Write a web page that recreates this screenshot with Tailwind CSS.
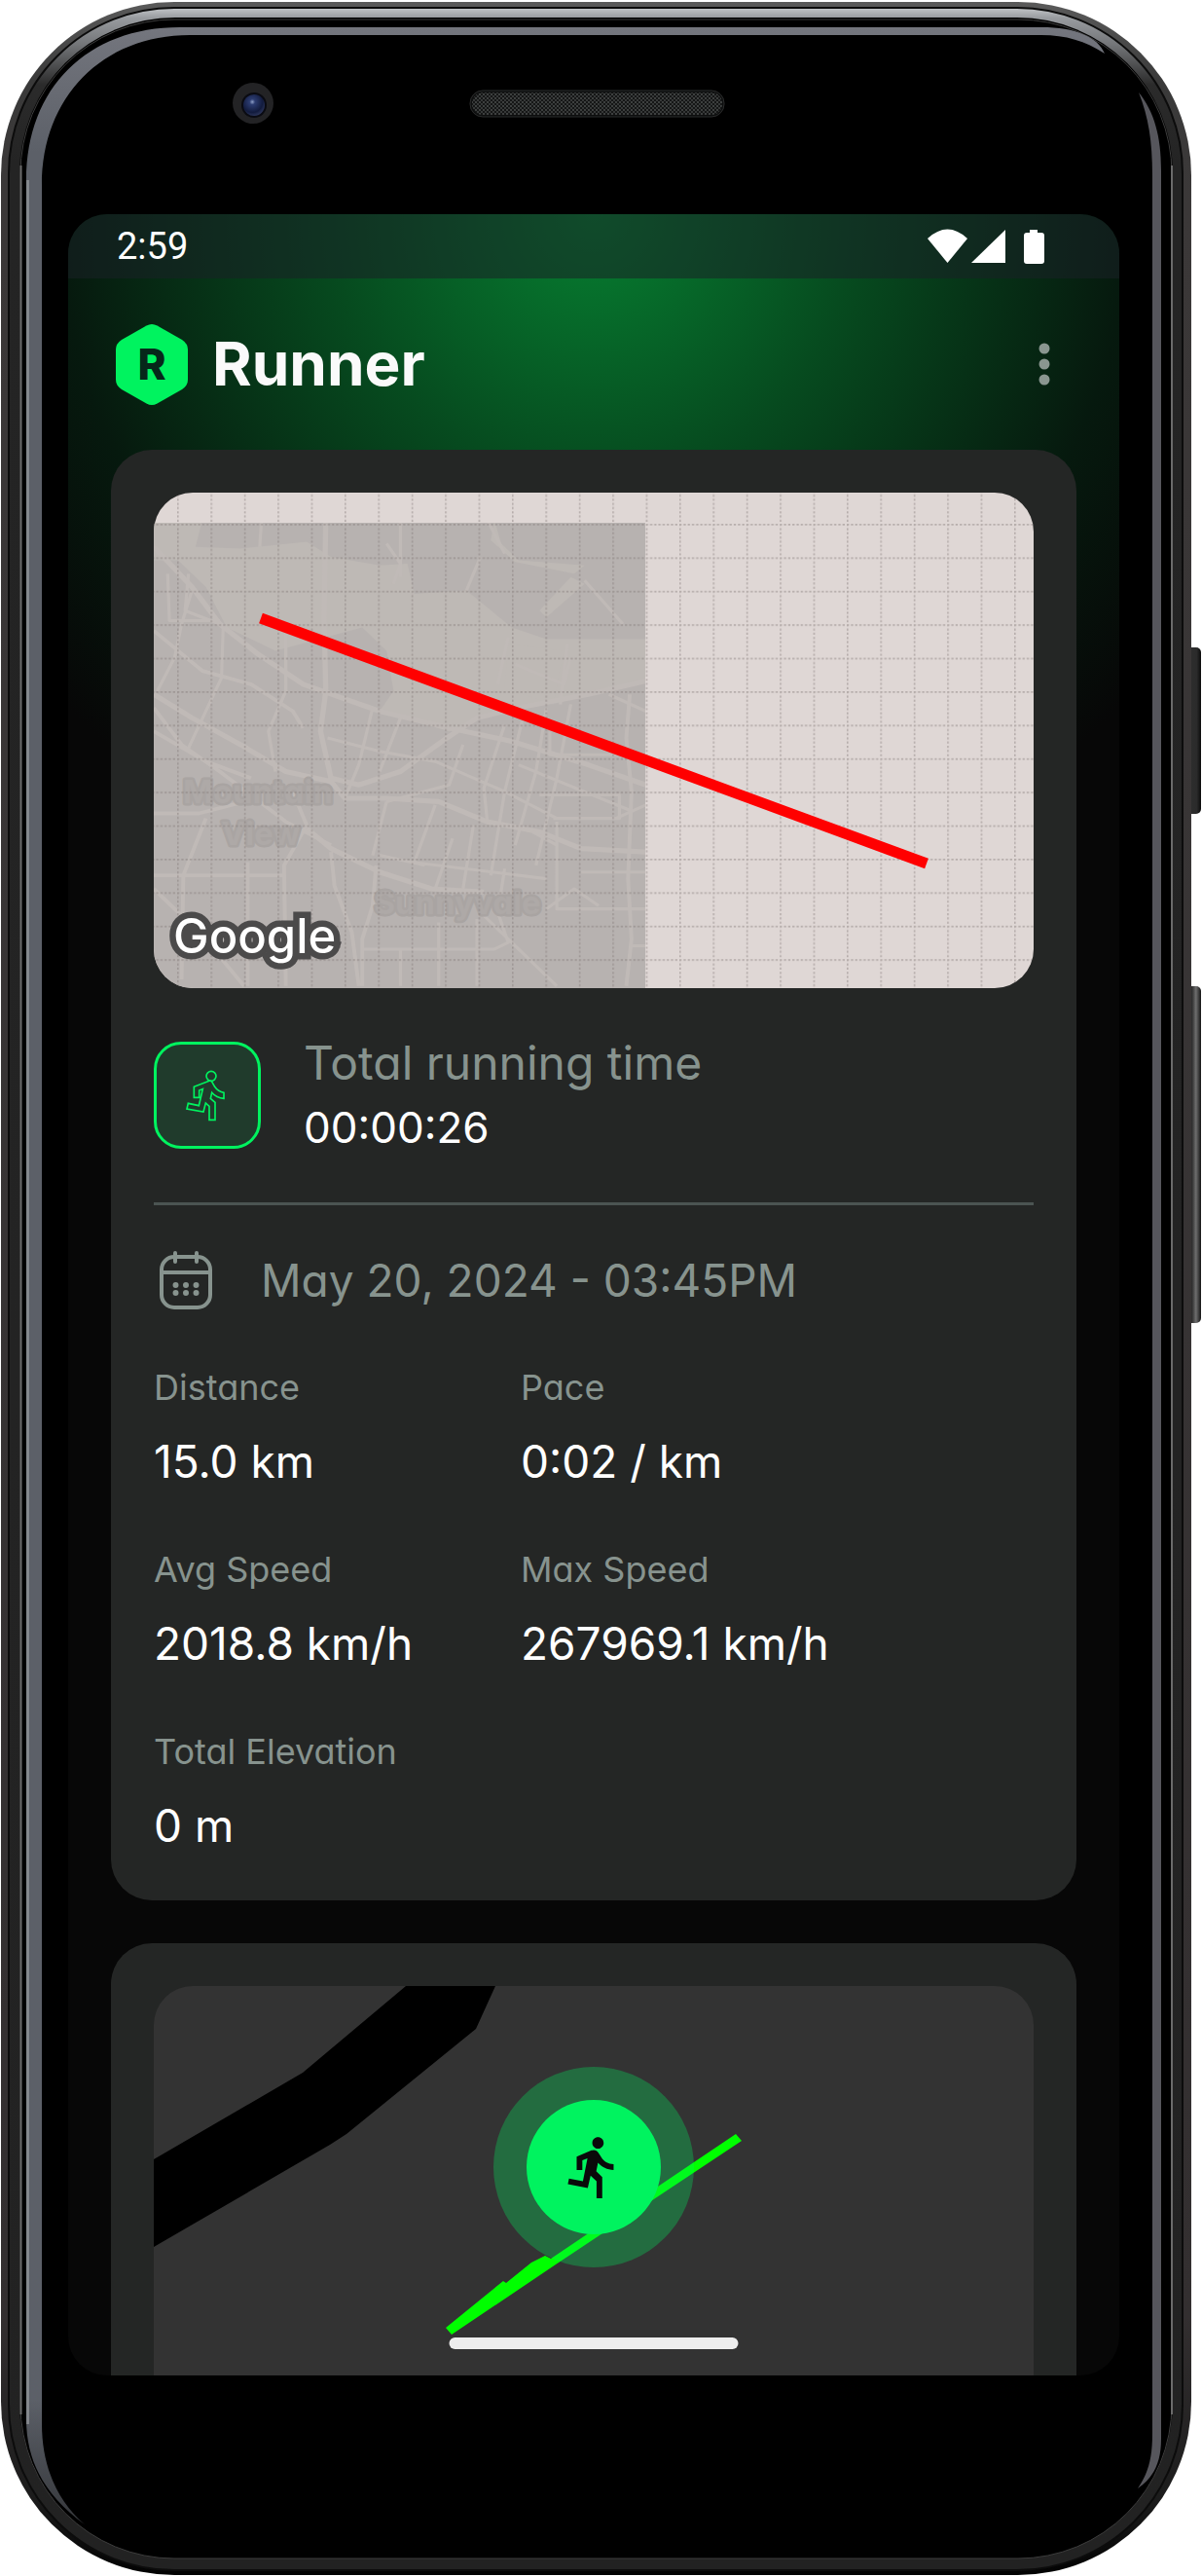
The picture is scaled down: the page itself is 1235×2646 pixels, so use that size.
<!DOCTYPE html>
<html lang="en">
<head>
<meta charset="utf-8">
<meta name="viewport" content="width=device-width, initial-scale=1">
<title>Runner</title>
<script src="https://cdn.jsdelivr.net/npm/@tailwindcss/browser@4"></script>
</head>
<body class="bg-white font-[Inter,sans-serif] [font-feature-settings:'cv11']">
<div class="relative pt-[220px] pr-[85px] pb-[206px] pl-[70px]">

  <!-- Phone body -->
  <svg class="absolute inset-0 h-full w-full" viewBox="0 0 1235 2646" preserveAspectRatio="none" aria-hidden="true">
    <defs>
      <linearGradient id="shell" x1="0" y1="0" x2="0" y2="1">
        <stop offset="0" stop-color="#5a5a5a"/><stop offset=".03" stop-color="#3a3a3a"/><stop offset=".08" stop-color="#3b3838"/>
        <stop offset=".9" stop-color="#332f30"/><stop offset=".97" stop-color="#1c1c1c"/><stop offset="1" stop-color="#020202"/>
      </linearGradient>
      <linearGradient id="band" gradientUnits="userSpaceOnUse" x1="0" y1="8" x2="0" y2="2641">
        <stop offset="0" stop-color="#c2c5c8"/><stop offset=".004" stop-color="#989b9f"/><stop offset=".014" stop-color="#75777a"/><stop offset=".03" stop-color="#2b2b2b"/>
        <stop offset=".06" stop-color="#242424"/><stop offset="1" stop-color="#222222"/>
      </linearGradient>
      <linearGradient id="shine" x1="0" y1="0" x2="0" y2="1">
        <stop offset="0" stop-color="#74767e"/><stop offset=".05" stop-color="#5c6068"/><stop offset=".95" stop-color="#5c6068"/><stop offset="1" stop-color="#34363a"/>
      </linearGradient>
      <linearGradient id="key" x1="0" y1="0" x2="1" y2="0">
        <stop offset="0" stop-color="#111"/><stop offset=".3" stop-color="#2d2d2d"/><stop offset=".7" stop-color="#2b2b2b"/><stop offset="1" stop-color="#0b0b0b"/>
      </linearGradient>
      <linearGradient id="keyLong" x1="0" y1="0" x2="1" y2="0">
        <stop offset="0" stop-color="#0b0b0b"/><stop offset=".4" stop-color="#333"/><stop offset=".65" stop-color="#6e6e6e"/><stop offset="1" stop-color="#141414"/>
      </linearGradient>
      <radialGradient id="lens" cx=".42" cy=".35" r=".65">
        <stop offset="0" stop-color="#8fa0c8"/><stop offset=".2" stop-color="#2c3c70"/><stop offset=".75" stop-color="#121b3d"/><stop offset="1" stop-color="#2a3358"/>
      </radialGradient>
      <pattern id="mesh" width="4" height="4" patternUnits="userSpaceOnUse">
        <rect width="4" height="4" fill="#151616"/><circle cx="1" cy="1" r=".9" fill="#515453"/><circle cx="3" cy="3" r=".9" fill="#464948"/>
      </pattern>
    </defs>
    <rect x="1219" y="665" width="15" height="171" rx="5" fill="url(#key)"/>
    <rect x="1219" y="1013" width="15" height="346" rx="5" fill="url(#keyLong)"/>
    <rect x="1" y="2" width="1223" height="2643" rx="178" fill="url(#shell)"/>
    <rect x="9" y="8" width="1206" height="2632" rx="170" fill="url(#band)" stroke="#0c0c0c" stroke-width="2"/>
    <rect x="20" y="18" width="1185" height="2610" rx="160" fill="#000"/>
    <rect x="21" y="20" width="1183" height="2608" rx="158" fill="#000" stroke="#3d3d3d"/>
    <path d="M21.500 170V2480M1204 170V2480" stroke="#6b6b6b" stroke-width="2"/>
    <path d="M87 2593C48 2565 27 2530 27 2485V185C27 90 90 28 185 28H1070C1105 28 1128 38 1135 55C1115 42 1095 36 1070 36H195C105 36 43 100 43 190V2490C43 2535 60 2570 87 2593Z" fill="url(#shine)"/>
    <path d="M28.500 185V2490" stroke="#a0a3a7" stroke-width="3" opacity=".6"/>
    <path d="M1170 95C1186 115 1193 140 1193 175V2505C1193 2530 1185 2545 1169 2556C1180 2540 1184 2525 1184 2500V180C1184 145 1180 120 1170 95Z" fill="#56565c"/>
    <circle cx="260" cy="106" r="21" fill="#232325"/>
    <circle cx="261" cy="108" r="13" fill="#0a0b12"/>
    <circle cx="261" cy="108" r="11" fill="url(#lens)"/>
    <rect x="483" y="93" width="261" height="27" rx="13" fill="#0d0e0e" stroke="#2b2c2c" stroke-width="1"/>
    <rect x="485" y="95" width="257" height="23" rx="11" fill="url(#mesh)"/>
  </svg>

  <!-- Screen -->
  <div class="relative overflow-hidden rounded-[40px] bg-[#070707] bg-[radial-gradient(circle_740px_at_50%_0px,#067f31_0%,#064b1f_36%,#06190e_74%,#070707_100%)]">
    <div class="flex h-[66px] items-center justify-between bg-[#1a2126]/55 pr-[75px] pl-[50px] font-[Roboto,sans-serif] text-[38px] leading-[66px] text-white">
      <time>2:59</time>
      <svg class="h-[36px] w-[122px]" viewBox="0 0 122 36" fill="#fff" role="img" aria-label="Wi-Fi, mobile signal, battery">
        <path d="M0 10Q20.500-9 41 10L20.500 35Z"/>
        <path d="M45 35H80V1Z"/>
        <path d="M105 1H113V4H117Q120 4 120 7V33Q120 36 117 36H102Q99 36 99 33V7Q99 4 102 4H105Z"/>
      </svg>
    </div>

    <header class="flex h-[176px] items-center pr-[67px] pl-[49px]">
      <div class="relative flex h-[83px] w-[74px] items-center justify-center">
        <svg class="absolute inset-0 h-full w-full" viewBox="0 0 74 83" aria-hidden="true">
          <path d="M31.500 1.500Q37-1.500 42.500 1.500L68 16Q74 20 74 26V57Q74 63 68 67L42.500 81.500Q37 84.500 31.500 81.500L6 67Q0 63 0 57V26Q0 20 6 16Z" fill="#00f35f"/>
        </svg>
        <span class="relative text-[44px] leading-[44px] font-extrabold text-[#06281a]">R</span>
      </div>
      <h1 class="ml-[25px] text-[62px] leading-[88px] font-bold text-[#fafafa]">Runner</h1>
      <button class="ml-auto flex h-[66px] w-[20px] items-center justify-center" aria-label="More options">
        <svg class="h-[44px] w-[12px]" viewBox="0 0 12 44" fill="#8a9690"><circle cx="6" cy="6" r="5.500"/><circle cx="6" cy="22" r="5.500"/><circle cx="6" cy="38" r="5.500"/></svg>
      </button>
    </header>

    <main class="flex flex-col gap-[44px] px-[44px]">
      <article class="rounded-[42px] bg-[#242625] p-[44px]">
        <!-- Route map -->
        <svg class="block h-[509px] w-full rounded-[40px]" viewBox="0 0 904 509" preserveAspectRatio="xMinYMin slice" role="img" aria-label="Route map">
          <defs>
            <pattern id="grid" x="24" y="32" width="34.400" height="34.400" patternUnits="userSpaceOnUse">
              <path d="M.8 0V34.400M0 .8H34.400" stroke="#7d7371" stroke-opacity=".42" stroke-width="1.600" stroke-dasharray="2.300 2"/>
            </pattern>
            <clipPath id="tile"><rect x="0" y="31" width="505" height="478"/></clipPath>
          </defs>
          <rect width="904" height="509" fill="#dfd7d5"/>
          <g clip-path="url(#tile)">
            <rect y="31" width="506" height="478" fill="#b7b2b0"/>
            <g transform="scale(.357 .3443) translate(-50 -48)">
              <path d="M50 130H190L170 210L300 215L490 195L560 240L700 265L780 260L800 350L950 340L1080 450L1180 485H1466V610L1300 650L1120 690L1000 720L900 760L700 700L740 640L720 520L650 450L580 470L400 520L260 450L200 330L120 250H50Z" fill="#beb9b5"/>
              <path d="M1160 400L1250 300L1290 320L1180 420ZM1030 130L1050 200L1100 250L1290 265L1260 290L1090 255L1020 190ZM1070 500L1060 630L1200 680L1230 520Z" fill="#beb9b5"/>
              <g fill="none" stroke="#c0bab7" stroke-linejoin="round">
                <path stroke-width="15" d="M50 210L160 330L240 440L350 530L480 620L700 700L900 750L1080 790L1300 860L1466 920M50 650L160 720L300 800L430 880L560 910L600 960L720 960L870 970L1010 1030L1160 1060L1280 1110L1466 1120M545 130L540 420L545 640L530 760L560 900L640 920L760 880L880 790L980 720L1100 690L1300 650L1466 610M490 1050L560 1110L700 1180L850 1230L1000 1240"/>
                <path stroke-width="11" d="M1420 650L1410 780L1425 940L1415 1200L1425 1380L1410 1520M50 460L190 580L330 620L450 700L480 750M50 760L200 850L330 900M50 1005H180L350 960M50 1190H430M130 1500L135 1190L200 1020M320 1520V1150M430 1520L425 1160L490 1040L450 940M560 1120L570 1220L620 1360L640 1520M690 1160L680 1280L650 1380V1520M50 1230L190 1370L310 1520M50 690L130 800L240 880L430 1030L560 1100"/>
                <path stroke-width="9" d="M430 440V640L380 760L400 880M250 440L245 600L150 810M240 440L140 400L150 290M90 290L95 430H240M160 340L130 440L110 540L60 640M680 690L640 860L600 960M760 720L700 880M1060 740L1000 930L1010 1030M1110 730L1060 940L1020 1190M1180 690L1150 880L1090 1100M1250 680L1210 900L1150 1160M550 780L700 820L860 850L1060 940L1210 1020M720 970L680 1130M860 980L800 1150M910 1080L860 1230M970 1040L940 1230M940 800L900 920L720 970M1190 760L1190 830H1420M1160 950H1390V1020H1200M1100 860L1430 1000M1210 1030V1290H1466M1140 1060L1210 1100M1280 1180H1466M1180 1290L1260 1230L1330 1280M1060 1170L1040 1300L1070 1390L1030 1410H650M760 1410V1520M870 1330V1520M980 1320V1520M1000 1310L1100 1410L1210 1520M1420 1400H1466M1010 130L1060 230M990 240L950 340M760 130V300M720 200L760 260L740 320M360 130L355 210M1090 560L1230 620L1250 540M1290 310L1400 440M1070 480L1040 620M1240 500L1220 680M1360 650L1466 700M1380 1020L1466 980M790 1150L1180 1200M700 1130L830 1160"/>
              </g>
            </g>
            <g font-family="Inter, sans-serif" font-size="33" font-weight="700" fill="#aea9a7" stroke="#a9a4a2" stroke-width="5" paint-order="stroke" stroke-linejoin="round" text-anchor="middle">
              <text x="107" y="319">Mountain</text>
              <text x="110" y="362">View</text>
              <text x="312" y="433">Sunnyvale</text>
            </g>
          </g>
          <rect width="904" height="509" fill="url(#grid)"/>
          <path d="M110 129L794 381" stroke="#f00" stroke-width="11"/>
          <text x="20" y="473" font-family="Inter, sans-serif" font-size="49" font-weight="500" fill="#fff" stroke="#4b4a4a" stroke-width="13" paint-order="stroke">Google</text>
        </svg>

        <section class="mt-[44px] flex items-center gap-[44px]">
          <div class="h-[110px] w-[110px] shrink-0 rounded-[28px] border-[3px] border-[#00f35f] bg-[#203b2c]">
            <svg class="block h-full w-full" viewBox="33 39 312 312" fill="none" stroke="#00f35f" stroke-width="5" aria-hidden="true">
              <circle cx="201" cy="136" r="15"/>
              <path d="M197 150L148 169V202H164V180L175 176L163 227L130 220L126 237L177 246L184 219L195 229V271H213V217L199 205L203 187Q217 204 240 205V187Q222 184 212 169L204 155Q201 150 197 150Z"/>
            </svg>
          </div>
          <div class="text-[44px] leading-[66px]">
            <h2 class="text-[48px] text-[#87938e]">Total running time</h2>
            <p class="text-white">00:00:26</p>
          </div>
        </section>

        <hr class="mt-[44px] h-[3px] border-0 bg-[#4b5452]">

        <div class="mt-[44px] flex items-center gap-[44px]">
          <svg class="h-[66px] w-[66px] shrink-0" viewBox="0 0 66 66" fill="none" stroke="#87938e" stroke-width="4" stroke-linecap="round" aria-hidden="true">
            <rect x="8" y="9" width="50" height="52" rx="13"/>
            <path d="M8 25H58"/><path d="M22 5V14M44 5V14"/>
            <path d="M22.500 38v.1M33 38v.1M43.500 38v.1M22.500 46v.1M33 46v.1M43.500 46v.1" stroke-width="6"/>
          </svg>
          <time class="text-[46px] leading-[66px] text-[#87938e]">May 20, 2024 - 03:45PM</time>
        </div>

        <dl class="mt-[52px] flex flex-wrap gap-y-[53px] text-[46px] leading-[66px] text-white">
          <div class="w-[377px]"><dt class="mb-[18px] text-[36px] leading-[50px] text-[#87938e]">Distance</dt><dd>15.0 km</dd></div>
          <div class="w-[377px]"><dt class="mb-[18px] text-[36px] leading-[50px] text-[#87938e]">Pace</dt><dd>0:02 / km</dd></div>
          <div class="w-[377px]"><dt class="mb-[18px] text-[36px] leading-[50px] text-[#87938e]">Avg Speed</dt><dd>2018.8 km/h</dd></div>
          <div class="w-[377px]"><dt class="mb-[18px] text-[36px] leading-[50px] text-[#87938e]">Max Speed</dt><dd>267969.1 km/h</dd></div>
          <div class="w-[377px]"><dt class="mb-[18px] text-[36px] leading-[50px] text-[#87938e]">Total Elevation</dt><dd>0 m</dd></div>
        </dl>
      </article>

      <article class="rounded-t-[42px] bg-[#242625] px-[44px] pt-[44px]">
        <svg class="block h-[400px] w-full rounded-t-[40px]" viewBox="0 0 904 400" preserveAspectRatio="xMidYMin slice" role="img" aria-label="Live position">
          <rect width="904" height="400" fill="#333"/>
          <path d="M259 0H351L331 44L198 152L181 163L0 268V178L153 89Z" fill="#000"/>
          <path d="M598 152L604 159L413 286L306 358L300 351L359 303L362 305L388 284L402 277L408 280Z" fill="#0f0"/>
          <circle cx="452" cy="186" r="103" fill="#00f35f" fill-opacity=".3"/>
          <circle cx="452" cy="186" r="69" fill="#00f35f"/>
          <g transform="translate(417 151) scale(2.920)" fill="#0a0a0a">
            <path d="M13.490 5.480c1.100 0 2-.9 2-2s-.9-2-2-2-2 .9-2 2 .9 2 2 2zm-3.600 13.900l1-4.400 2.100 2v6h2v-7.500l-2.100-2 .6-3c1.300 1.500 3.300 2.500 5.500 2.500v-2c-1.900 0-3.500-1-4.300-2.400l-1-1.600c-.4-.6-1-1-1.700-1-.3 0-.5.1-.8.1l-5.200 2.200v4.700h2v-3.400l1.800-.7-1.600 8.100-4.900-1-.4 2 7 1.400z"/>
          </g>
        </svg>
      </article>
    </main>

    <!-- Gesture bar -->
    <div class="absolute bottom-[27px] left-1/2 h-[12px] w-[297px] -translate-x-1/2 rounded-full bg-[#eee]"></div>
  </div>
</div>
</body>
</html>
